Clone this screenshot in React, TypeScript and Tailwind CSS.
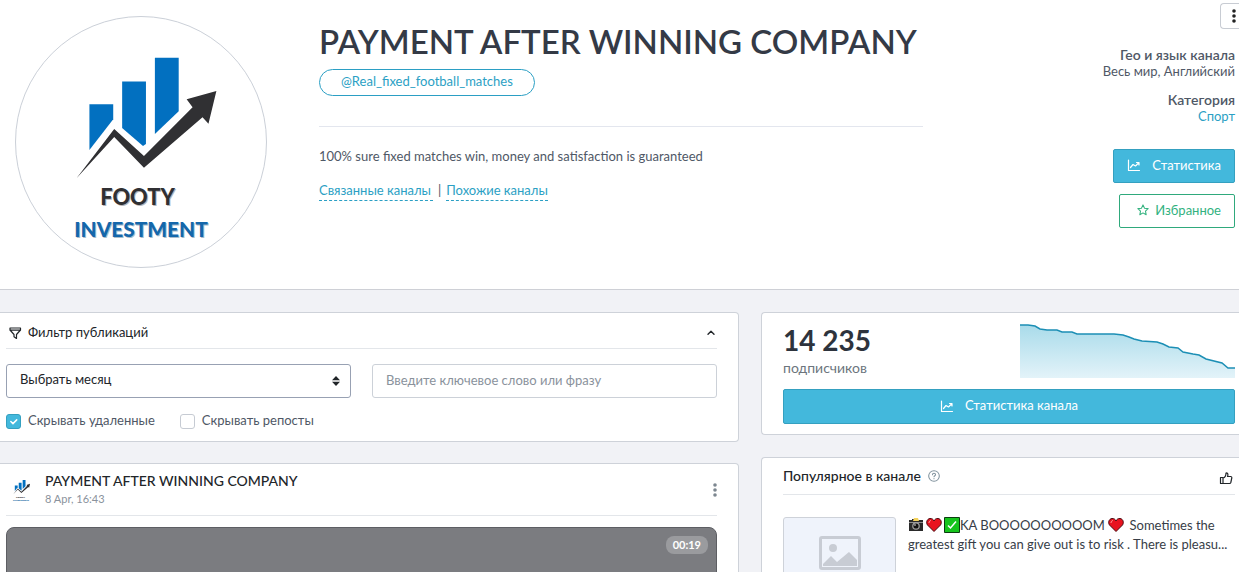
import { useState } from "react";
import type { ReactNode } from "react";

const CHART_LINE =
  "0,2 8,2 15,3 20,6 27,7 37,7 42,9 52,9 57,11 70,11 94,11 103,12 109,14 114,16 122,18 137,19 143,21 149,24 158,25 163,29 173,31 179,32 186,36 202,40 208,45 215,45";

function Logo({ className }: { className?: string }) {
  return (
    <svg viewBox="15 16 252 252" className={className} role="img" aria-label="Footy Investment">
      <g fill="#0270c0">
        <path d="M89 104h24v15L89 150z" />
        <path d="M122 81h24v63l-3 2-21-18z" />
        <path d="M155 57h24v54l-24 23z" />
      </g>
      <path
        d="M76 178.500L114 129l30 27 49-49-6-8 30-8.500-8 33-6-6.500-59 51-30-31z"
        fill="#303033"
      />
      <g textAnchor="middle" fontFamily="Lato, sans-serif" fontWeight="900">
        <text x="138.500" y="207" fontSize="22" fill="#b5b5b8">FOOTY</text>
        <text x="137.500" y="206" fontSize="22" fill="#303033">FOOTY</text>
        <text x="142" y="238.500" fontSize="21" fill="#a9bccb">INVESTMENT</text>
        <text x="141" y="237.500" fontSize="21" fill="#1467ab">INVESTMENT</text>
      </g>
    </svg>
  );
}

function Icon({ className, children }: { className?: string; children: ReactNode }) {
  return (
    <svg
      viewBox="0 0 14 14"
      className={className}
      fill="none"
      stroke="currentColor"
      strokeLinecap="round"
      strokeLinejoin="round"
      aria-hidden="true"
    >
      {children}
    </svg>
  );
}

function ChartIcon() {
  return (
    <Icon className="size-3.5">
      <path d="M1.500 2v10.500h11" strokeWidth="1.200" />
      <path d="M3.500 9.500L6 6.500l2.500 1.500 3-3M9.500 4.500H12V7" strokeWidth="1.200" />
    </Icon>
  );
}

function Dots({ className }: { className?: string }) {
  return (
    <svg viewBox="0 0 4 14" className={className} fill="currentColor" aria-hidden="true">
      <circle cx="2" cy="2" r="1.800" />
      <circle cx="2" cy="7" r="1.800" />
      <circle cx="2" cy="12" r="1.800" />
    </svg>
  );
}

function Camera() {
  return (
    <svg viewBox="0 0 16 16" className="mr-0.5 inline-block size-4 align-[-3px]" role="img" aria-label="camera">
      <path d="M1 3h3V2h3l1 1h7v11H1z" fill="#2a2a2a" />
      <path d="M1 5h14v1H1z" fill="#8f8f8f" />
      <path d="M6 1h4l1 3H5z" fill="#f4d35e" />
      <circle cx="8" cy="9" r="3.800" fill="#a3a3a3" />
      <circle cx="8" cy="9" r="2.600" fill="#111" />
      <circle cx="7" cy="8" r=".8" fill="#eee" />
    </svg>
  );
}

function Heart() {
  return (
    <svg viewBox="0 0 16 16" className="mr-0.5 inline-block size-4 align-[-3px]" role="img" aria-label="heart">
      <path
        d="M8 14.500L1.500 8C0 6 .5 2 4 1.500 6 1.300 7.500 2.500 8 4c.5-1.500 2-2.700 4-2.500C15.500 2 16 6 14.500 8z"
        fill="#e8131f"
        stroke="#4a0a10"
        strokeWidth="1"
      />
      <path d="M3 6c0-1.500.8-2.300 2-2.500" stroke="#ff9a9a" strokeWidth="1" fill="none" />
    </svg>
  );
}

function Check() {
  return (
    <svg viewBox="0 0 16 16" className="inline-block size-4 align-[-3px]" role="img" aria-label="check">
      <path d="M.5.5h15v15H.5z" fill="#16c41c" stroke="#0b3d10" />
      <path d="M4 8.500l2.500 2.500L12 4.500" fill="none" stroke="#fff" strokeWidth="1.500" />
    </svg>
  );
}

function Header() {
  return (
    <header className="flex border-b border-[#ced0d6] bg-white">
      <div className="shrink-0 pt-4 pb-[21px] pl-[15px]">
        <Logo className="size-[252px] rounded-full border border-[#cbd0d8]" />
      </div>
      <div className="ml-[52px] min-w-0 flex-1 pt-[23px]">
        <h1 className="text-[33px] leading-9 font-semibold whitespace-nowrap text-[#343a46]">
          PAYMENT AFTER WINNING COMPANY
        </h1>
        <a
          href="#channel"
          className="mt-2.5 flex h-[27px] w-fit items-center rounded-full border border-[#2b9fc4] px-[21px] pb-0.5 text-[#2b9fc4]"
        >
          @Real_fixed_football_matches
        </a>
        <hr className="mt-[30px] border-[#e3e6ee]" />
        <p className="mt-[19px] leading-5">
          100% sure fixed matches win, money and satisfaction is guaranteed
        </p>
        <div className="mt-3.5 flex gap-[5px] leading-5">
          <a href="#linked" className="border-b border-dashed border-[#2b9fc4] pr-0.5 text-[#2b9fc4]">
            Связанные каналы
          </a>
          <span>|</span>
          <a href="#similar" className="border-b border-dashed border-[#2b9fc4] text-[#2b9fc4]">
            Похожие каналы
          </a>
        </div>
      </div>
      <div className="flex w-[316px] shrink-0 flex-col items-end pt-[3px] leading-[17px]">
        <button
          aria-label="Меню"
          className="flex h-[26px] w-[19px] items-center justify-end rounded-l border border-r-0 border-[#c8ccd3] pr-[3px] text-[#222]"
        >
          <Dots className="h-3.5 w-1" />
        </button>
        <div className="mt-[17px] flex flex-col items-end pr-1">
          <span className="text-[14px] font-semibold">Гео и язык канала</span>
          <span>Весь мир, Английский</span>
          <span className="mt-[11px] text-[14px] font-semibold">Категория</span>
          <a href="#sport" className="text-[#2b9fc4]">
            Спорт
          </a>
          <button className="mt-6 flex h-[34px] items-center gap-[11px] rounded-xs border border-[#34a0c0] bg-[#43b8dc] px-[13px] pb-0.5 text-white">
            <ChartIcon />
            Статистика
          </button>
          <button className="mt-[11px] flex h-[34px] items-center gap-1.5 rounded-xs border border-[#2fa97c] px-[13px] pb-0.5 pl-[17px] text-[#33b27f]">
            <Icon className="size-3">
              <path
                d="M7 1l1.800 3.900 4.200.5-3.100 2.900.8 4.200L7 10.400l-3.700 2.100.8-4.200L1 5.400l4.200-.5z"
                strokeWidth="1.200"
              />
            </Icon>
            Избранное
          </button>
        </div>
      </div>
    </header>
  );
}

function FilterCard() {
  const [hideDeleted, setHideDeleted] = useState(true);
  const [hideReposts, setHideReposts] = useState(false);

  return (
    <section className="rounded-r border border-l-0 border-[#ced2d9] bg-white pr-[21px] pb-2.5 pl-1.5">
      <div className="flex h-9 items-center border-b border-[#e3e6ea] pt-1 text-[#212529]">
        <Icon className="mx-0.5 size-3.5">
          <path d="M2 2h10.500v2L8.500 8.500v4l-2.500-1.800V8.500L2 4z M2 4.200h10.500" strokeWidth="1.200" />
        </Icon>
        <h2 className="ml-1">Фильтр публикаций</h2>
        <button aria-label="Свернуть" className="ml-auto">
          <Icon className="size-3">
            <path d="M3.500 8.500L7 5l3.500 3.500" strokeWidth="1.600" />
          </Icon>
        </button>
      </div>
      <div className="mt-[15px] grid grid-cols-2 gap-[21px]">
        <div className="relative">
          <select
            aria-label="Месяц"
            className="h-[34px] w-full appearance-none rounded-[3px] border border-[#98a1b3] bg-white px-[13px] pb-0.5 text-[#212529]"
          >
            <option>Выбрать месяц</option>
          </select>
          <svg viewBox="0 0 8 10" className="pointer-events-none absolute top-3 right-[11px] h-2.5 w-2" aria-hidden="true">
            <path d="M4 0l4 4.200H0zM4 10L0 5.800h8z" fill="#212529" />
          </svg>
        </div>
        <input
          type="text"
          aria-label="Ключевое слово"
          placeholder="Введите ключевое слово или фразу"
          className="h-[34px] w-full rounded-[3px] border border-[#ccd1d8] px-[13px] pb-0.5 placeholder:text-[#8a929c]"
        />
      </div>
      <div className="mt-[11px] flex gap-[25px] leading-[22px]">
        <Toggle label="Скрывать удаленные" checked={hideDeleted} onChange={setHideDeleted} />
        <Toggle label="Скрывать репосты" checked={hideReposts} onChange={setHideReposts} />
      </div>
    </section>
  );
}

function Toggle({ label, checked, onChange }: { label: string; checked: boolean; onChange: (v: boolean) => void }) {
  return (
    <label className="flex items-center gap-[7px]">
      <span className="relative mt-0.5 flex">
        <input
          type="checkbox"
          checked={checked}
          onChange={(e) => onChange(e.target.checked)}
          className="size-[15px] appearance-none rounded-[3px] border border-[#c6cbd3] bg-white checked:border-[#34a0c0] checked:bg-[#43b8dc]"
        />
        {checked && (
          <Icon className="pointer-events-none absolute inset-0 size-[15px] text-white">
            <path d="M4.500 7l2 2 3.500-3.500" strokeWidth="1.400" />
          </Icon>
        )}
      </span>
      {label}
    </label>
  );
}

function PostCard() {
  return (
    <article className="rounded-r border border-l-0 border-[#ced2d9] bg-white pr-[21px] pb-4 pl-1.5">
      <div className="flex h-[52px] items-center border-b border-[#e3e6ea]">
        <Logo className="size-[30px]" />
        <div className="ml-[9px]">
          <h3 className="text-[14px] leading-[18px] font-medium text-[#212529]">PAYMENT AFTER WINNING COMPANY</h3>
          <p className="text-[11px] leading-[17px] text-[#8a929c]">8 Apr, 16:43</p>
        </div>
        <button aria-label="Действия" className="ml-auto text-[#7d8790]">
          <Dots className="h-3.5 w-1" />
        </button>
      </div>
      <div className="mt-[11px] flex h-80 items-start justify-end rounded-lg border border-[#5d5e63] bg-[#7b7c80] p-2">
        <span className="rounded-lg bg-[#9a9b9e] px-[7px] text-[11px] leading-[18px] font-bold text-white">00:19</span>
      </div>
    </article>
  );
}

function StatsCard() {
  return (
    <section className="rounded-l border border-r-0 border-[#ced2d9] bg-white pt-2.5 pr-1 pb-2.5 pl-[21px]">
      <div className="flex justify-between">
        <div>
          <p className="pt-0.5 text-[28px] leading-[30px] font-bold text-[#2d333d]">14 235</p>
          <p className="mt-[5px] text-[14px] leading-4 text-[#6c757d]">подписчиков</p>
        </div>
        <svg viewBox="0 0 215 55" className="h-[55px] w-[215px]" role="img" aria-label="График подписчиков">
          <defs>
            <linearGradient id="area" x1="0" y1="0" x2="0" y2="1">
              <stop offset="0" stopColor="#a9dbea" />
              <stop offset="1" stopColor="#e3f3f9" />
            </linearGradient>
          </defs>
          <polygon points={`0,55 ${CHART_LINE} 215,55`} fill="url(#area)" />
          <polyline points={CHART_LINE} fill="none" stroke="#1c8fb5" strokeWidth="1.500" />
        </svg>
      </div>
      <button className="mt-[11px] flex h-[35px] w-full items-center justify-center gap-[11px] rounded-xs border border-[#34a0c0] bg-[#43b8dc] pb-0.5 text-white">
        <ChartIcon />
        Статистика канала
      </button>
    </section>
  );
}

function PopularCard() {
  return (
    <section className="rounded-l border border-r-0 border-[#ced2d9] bg-white pr-1 pb-5 pl-[21px]">
      <div className="flex h-[37px] items-center border-b border-[#e3e6ea] text-[#212529]">
        <h2 className="pb-0.5 text-[14px] font-medium">Популярное в канале</h2>
        <Icon className="ml-[7px] size-3 text-[#7f919c]">
          <circle cx="7" cy="7" r="6.200" strokeWidth="1.200" />
          <path d="M5.200 5.600c0-2.400 3.600-2.200 3.600-.2 0 1.300-1.800 1.300-1.800 2.600M7 10v.2" strokeWidth="1.200" />
        </Icon>
        <Icon className="mt-1 mr-0.5 ml-auto size-3.5">
          <path
            d="M4 6.500H1.500v6H4zM4 7c2-.5 3-2.500 3-5 2.200-.5 2.200 2 1.500 3.500h3.200c.8 0 1.300.8 1.100 1.500l-1 4.500c-.2.600-.6 1-1.200 1H4"
            strokeWidth="1.200"
          />
        </Icon>
      </div>
      <a href="#post" className="mt-[22px] flex gap-3 text-[#373d47]">
        <span className="flex h-[113px] w-[113px] shrink-0 justify-center rounded-[3px] border border-[#ced2d9] bg-[#eff3fb] pt-[18px]">
          <svg viewBox="0 0 42 34" className="h-[34px] w-[42px]" aria-hidden="true">
            <rect x="1.500" y="1.500" width="39" height="31" rx="1.500" fill="none" stroke="#c8ccd4" strokeWidth="3" />
            <circle cx="14" cy="12" r="4" fill="#c8ccd4" />
            <path d="M4 30v-2l8-8 6 6 12-10 8 8v6z" fill="#c8ccd4" />
          </svg>
        </span>
        <span className="-mt-px leading-[19px] whitespace-nowrap">
          <Camera />
          <Heart />
          <Check />
          KA BOOOOOOOOOOM <Heart /> Sometimes the
          <br />
          greatest gift you can give out is to risk . There is pleasu...
        </span>
      </a>
    </section>
  );
}

export default function App() {
  return (
    <div className="flex h-screen flex-col overflow-hidden bg-[#f1f2f6] font-[Lato,'Noto_Sans',sans-serif] text-[13px] text-[#4f5866]">
      <Header />
      <main className="grid grid-cols-[739fr_478fr] items-start gap-[22px] pt-[22px]">
        <div className="flex min-w-0 flex-col gap-[21px]">
          <FilterCard />
          <PostCard />
        </div>
        <div className="flex min-w-0 flex-col gap-[22px]">
          <StatsCard />
          <PopularCard />
        </div>
      </main>
    </div>
  );
}
